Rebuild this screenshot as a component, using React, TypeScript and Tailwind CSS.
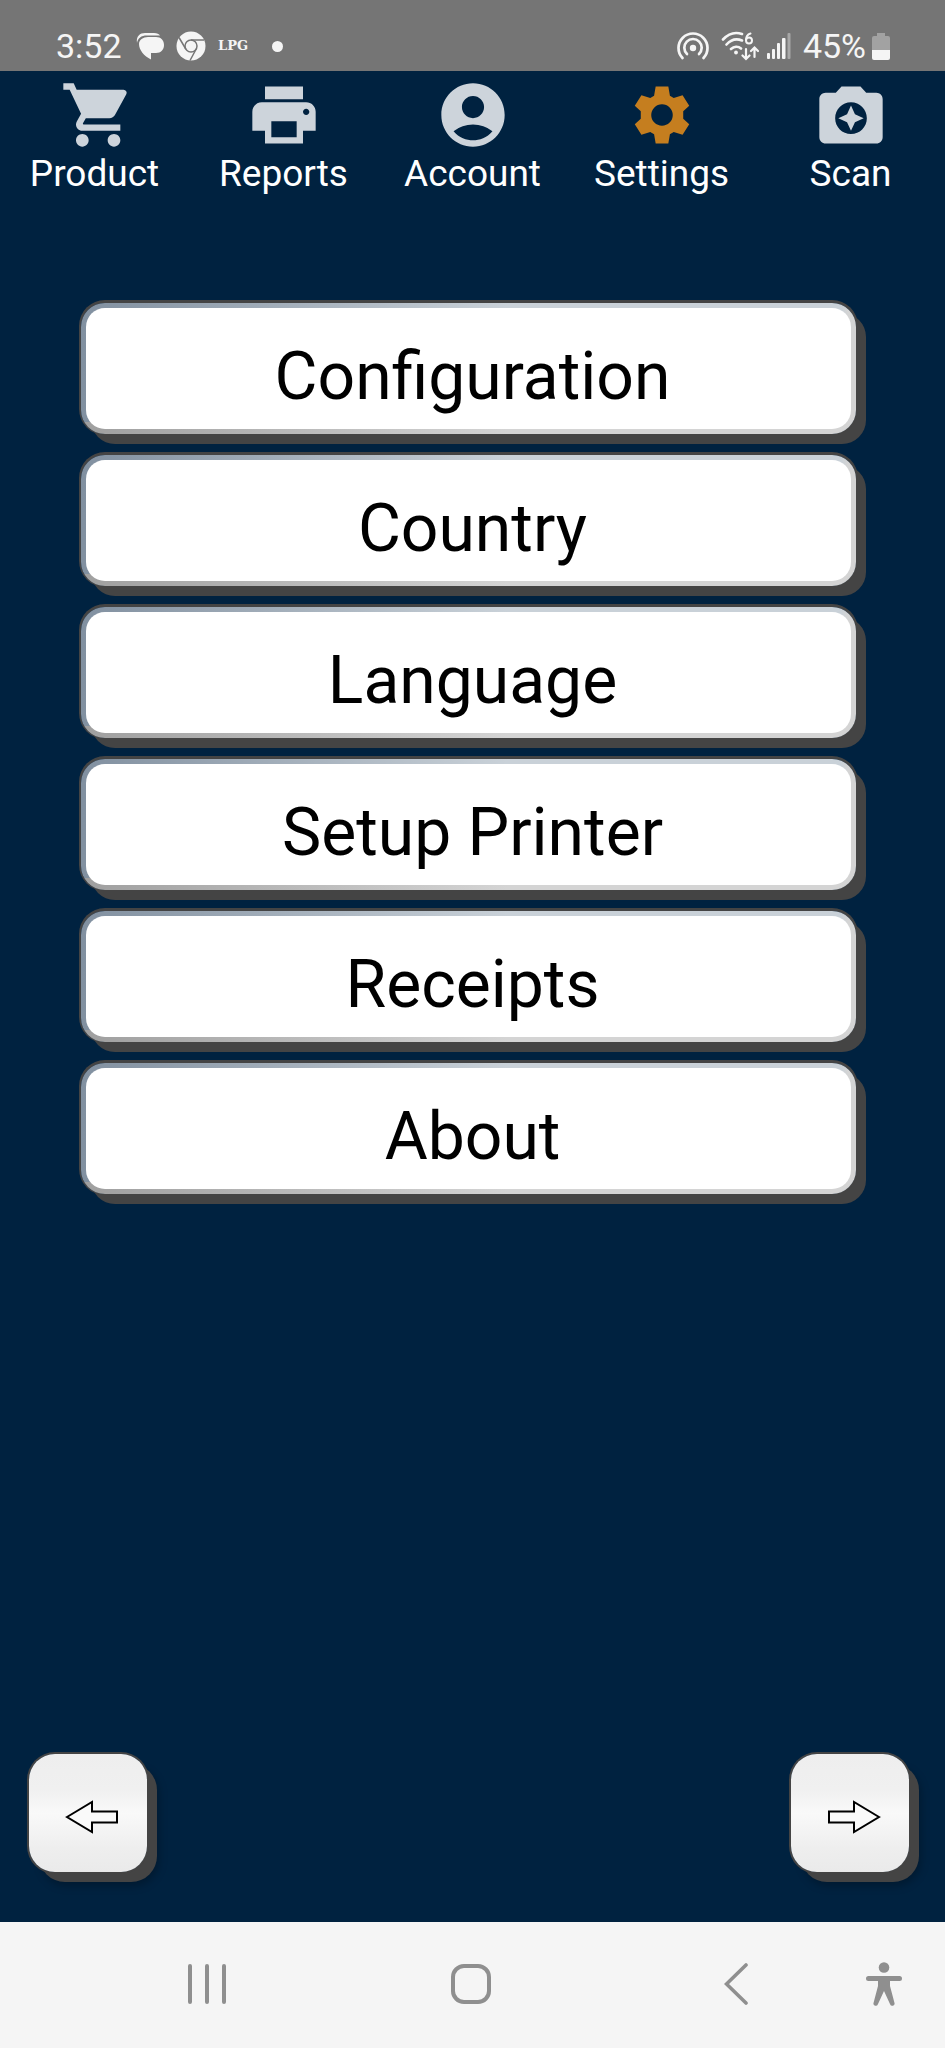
import React from 'react';
import { MdPrint, MdAccountCircle } from 'react-icons/md';

interface NavItem {
  label: string;
  icon: React.ReactNode;
  active?: boolean;
}

const CartIcon = () => (
  <svg viewBox="-1 0 24 24" className="h-[76px] w-[76px]" fill="currentColor">
    <path d="M7 18c-1.100 0-2 .9-2 2s.9 2 2 2 2-.9 2-2-.9-2-2-2zM1 2v2h2l3.600 7.590-1.350 2.450c-.16.280-.25.610-.25.960 0 1.100.9 2 2 2h12v-2H7.420c-.14 0-.25-.11-.25-.25l.03-.12.9-1.630h7.450c.75 0 1.410-.41 1.750-1.030l3.580-6.490A1 1 0 0 0 20 4H5.210l-.94-2H1zM17 18c-1.100 0-2 .9-2 2s.9 2 2 2 2-.9 2-2-.9-2-2-2z" />
  </svg>
);

const GearIcon = () => (
  <svg viewBox="0 0 24 24" className="h-[76px] w-[76px]" fill="currentColor">
    <path
      fillRule="evenodd"
      d="M10 3h4l.5 2.900 1.200.7 2.800-.8 2.100 3.300-1.900 1.700v2.400l1.900 1.700-2.100 3.300-2.800-.8-1.200.7L14 21h-4l-.5-2.900-1.200-.7-2.800.8-2.100-3.300 1.900-1.700v-2.400L3.400 9.100l2.100-3.300 2.800.8 1.200-.7zM12 8.600a3.400 3.400 0 1 0 0 6.800 3.400 3.400 0 0 0 0-6.800z"
    />
  </svg>
);

const ScanIcon = () => (
  <svg viewBox="0 0 24 24" className="h-[76px] w-[76px]" fill="currentColor">
    <path
      fillRule="evenodd"
      d="M20 5h-3.200L15 3H9L7.200 5H4c-1.100 0-2 .9-2 2v12c0 1.100.9 2 2 2h16c1.100 0 2-.9 2-2V7c0-1.100-.9-2-2-2zm-8 13c-2.760 0-5-2.240-5-5s2.240-5 5-5 5 2.240 5 5-2.240 5-5 5z"
    />
    <path d="M12 17l1.250-2.750L16 13l-2.750-1.250L12 9l-1.250 2.750L8 13l2.750 1.250z" />
  </svg>
);

const navItems: NavItem[] = [
  { label: 'Product', icon: <CartIcon /> },
  { label: 'Reports', icon: <MdPrint className="h-[76px] w-[76px]" /> },
  { label: 'Account', icon: <MdAccountCircle className="h-[76px] w-[76px]" /> },
  { label: 'Settings', icon: <GearIcon />, active: true },
  { label: 'Scan', icon: <ScanIcon /> },
];

const menuItems = ['Configuration', 'Country', 'Language', 'Setup Printer', 'Receipts', 'About'];

const StatusBar = () => (
  <div className="flex h-[71px] items-end justify-between bg-[#757575] pr-[55px] pb-[7px] pl-14 text-[#f5f5f5]">
    <div className="flex h-9 items-center">
      <span className="w-[66px] text-[34px] leading-9">3:52</span>
      <svg viewBox="0 0 28 28" className="ml-3.5 h-7 w-7" fill="currentColor">
        <path d="M1 11C0 4 4 1 9 1h9c3 0 5 1 6 2.500H11C5 3.500 2 6 1 11z" />
        <path d="M12 5h8c5 0 8 3.500 8 8s-3 8-8 8h-5v6.500C8 24 3 18 3 12c0-4 4-7 9-7z" />
      </svg>
      <svg viewBox="0 0 30 30" className="ml-3 h-[30px] w-[30px]">
        <circle cx="15" cy="15" r="14.500" fill="currentColor" />
        <g fill="none" stroke="#757575" strokeWidth="1.500">
          <circle cx="15" cy="15" r="6" />
          <path d="M15 9h13M9.800 18L3 6.500M20.200 18L14 29.500" />
        </g>
      </svg>
      <span className="ml-3 w-[30px] font-['DejaVu_Serif',serif] text-[13px] leading-9 font-bold">LPG</span>
      <span className="ml-6 h-[11px] w-[11px] rounded-full bg-current" />
    </div>
    <div className="flex h-9 items-center">
      <svg viewBox="0 0 32 28" className="h-7 w-8" fill="none" stroke="currentColor" strokeWidth="2.700" strokeLinecap="round">
        <path d="M5.500 26A14.500 14.500 0 1 1 26.500 26" />
        <path d="M10 22A8.700 8.700 0 1 1 22 22" />
        <circle cx="16" cy="16" r="3.200" fill="currentColor" stroke="none" />
      </svg>
      <svg viewBox="0 0 38 30" className="ml-3 h-[30px] w-[38px]" fill="none" stroke="currentColor" strokeWidth="2.600" strokeLinecap="round">
        <path d="M2 8.500C8 2 15 1 21 3M5.500 13.500C10 8.500 16 7.500 21 9.500M10 18c3-2.500 7-3 10-.5" />
        <circle cx="15" cy="21.500" r="1.900" fill="currentColor" stroke="none" />
        <path d="M29.500 2.500c-3 1-4.500 4-4.500 6.500" strokeWidth="2" />
        <circle cx="28" cy="9.500" r="3" strokeWidth="2" />
        <path d="M25 18v9M21.500 24.500L25 28l3.500-3.500M33.500 26v-9M30 20l3.500-3.500L37 20" strokeWidth="2.200" />
      </svg>
      <svg viewBox="0 0 24 27" className="ml-2 h-[27px] w-6" fill="currentColor">
        <rect x="0" y="20" width="3" height="6" rx="1" />
        <rect x="5" y="16" width="3" height="10" rx="1" />
        <rect x="10" y="10" width="3" height="16" rx="1" />
        <rect x="15" y="5" width="3.500" height="21" rx="1" />
        <rect x="20.500" y="0" width="3" height="26" rx="1" opacity=".4" />
      </svg>
      <span className="ml-3 text-[34px] leading-9">45%</span>
      <svg viewBox="0 0 18 27" className="ml-1.5 h-[27px] w-[18px]" fill="currentColor">
        <path d="M5 0h8v3h3a2 2 0 0 1 2 2v12H0V5a2 2 0 0 1 2-2h3z" opacity=".35" />
        <path d="M0 17h18v8a2 2 0 0 1-2 2H2a2 2 0 0 1-2-2z" />
      </svg>
    </div>
  </div>
);

const TopNav = () => (
  <nav className="grid grid-cols-5 pt-1.5">
    {navItems.map((item) => (
      <button key={item.label} className="flex flex-col items-center">
        <span className={item.active ? 'text-[#c57e1f]' : 'text-[#cdd4db]'}>{item.icon}</span>
        <span className="text-[37px] leading-[42px] text-white">{item.label}</span>
      </button>
    ))}
  </nav>
);

const ArrowButton: React.FC<{ label: string; flip?: boolean }> = ({ label, flip }) => (
  <button
    aria-label={label}
    className="flex h-[118px] w-[118px] items-center justify-center rounded-[26px] bg-[linear-gradient(#eeeeee,#f0f0f0_30%,#f9f9f9_50%,#eeeeee_80%,#eaeaea)] pt-2 pl-2 shadow-[0_0_0_2px_#444,10px_10px_0_#444,12px_14px_8px_rgba(0,0,0,0.25)]"
  >
    <svg viewBox="0 0 54 34" className={flip ? 'h-[34px] w-[54px] -scale-x-100' : 'h-[34px] w-[54px]'}>
      <path d="M2 17L27 2v9.500h25v11H27V32z" fill="#fafafa" stroke="#000" strokeWidth="2" />
    </svg>
  </button>
);

const SystemBar = () => (
  <div className="grid h-[126px] grid-cols-[413fr_116fr_416fr] items-center bg-[#f5f5f5] pb-0.5 text-[#8f8f8f]">
    <button aria-label="Recent apps" className="justify-self-center">
      <svg viewBox="0 0 40 40" className="h-10 w-10" fill="none" stroke="currentColor" strokeWidth="4" strokeLinecap="round">
        <path d="M3 2v36M20 2v36M37 2v36" />
      </svg>
    </button>
    <button aria-label="Home" className="justify-self-center">
      <span className="block h-10 w-10 rounded-[13px] border-4 border-current" />
    </button>
    <div className="flex items-center justify-end pr-[43px]">
      <button aria-label="Back">
        <svg viewBox="0 0 24 42" className="h-[42px] w-6" fill="none" stroke="currentColor" strokeWidth="3.600" strokeLinecap="round">
          <path d="M22 2L2.500 21L22 40" />
        </svg>
      </button>
      <button aria-label="Accessibility" className="ml-[118px]">
        <svg viewBox="0 0 36 44" className="h-11 w-9" fill="currentColor">
          <circle cx="18" cy="5.500" r="5.300" />
          <path d="M2.500 14h31a2.500 2.500 0 0 1 0 5H24v5l4.500 17a2.300 2.300 0 0 1-4.400 1.300L18 29l-6.100 13.300A2.300 2.300 0 0 1 7.500 41L12 24v-5H2.500a2.500 2.500 0 0 1 0-5z" />
        </svg>
      </button>
    </div>
  </div>
);

const App: React.FC = () => {
  return (
    <div className="flex min-h-screen flex-col bg-[#002240] font-[Roboto,sans-serif]">
      <StatusBar />
      <TopNav />
      <main className="flex flex-1 flex-col gap-[21px] pt-[108px] pr-[89px] pl-[81px]">
        {menuItems.map((item) => (
          <button
            key={item}
            className="h-[131px] w-full rounded-3xl border-[5px] border-transparent [background:linear-gradient(#fff,#fff)_padding-box,linear-gradient(to_right,#9f9f9f,#d4d4d4_55%)_bottom/100%_12px_no-repeat_border-box,linear-gradient(to_right,#8190a0,#c9d1d8_55%,#c9d1d8_98%,#d4d4d4_99%)_border-box] pt-4 pl-2 text-[66px] leading-[76px] text-black shadow-[0_-1px_0_2px_#444,10px_10px_0_#444]"
          >
            {item}
          </button>
        ))}
      </main>
      <div className="flex justify-between pr-9 pb-[50px] pl-[29px]">
        <ArrowButton label="Previous" />
        <ArrowButton label="Next" flip />
      </div>
      <SystemBar />
    </div>
  );
};

export default App;
